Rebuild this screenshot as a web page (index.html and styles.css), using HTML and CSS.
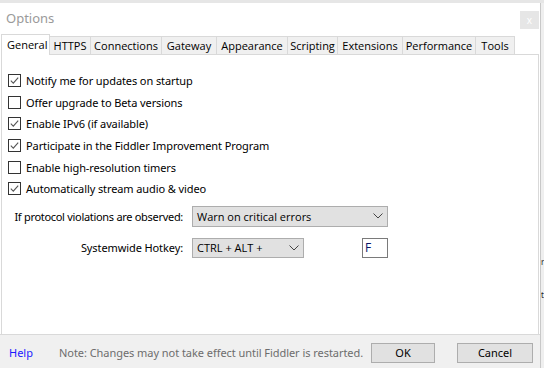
FILE: index.html
```html
<!DOCTYPE html>
<html>
<head>
<meta charset="utf-8">
<link rel="stylesheet" href="styles.css">
</head>
<body>
<div class="screen">
  <div class="dialog">
    <div class="titlebar">
      <span class="title">Options</span>
      <span class="close">x</span>
    </div>
    <div class="tabs">
      <div class="tab active w-general">General</div>
      <div class="tab w-https">HTTPS</div>
      <div class="tab w-conn">Connections</div>
      <div class="tab w-gate">Gateway</div>
      <div class="tab w-appear">Appearance</div>
      <div class="tab w-script">Scripting</div>
      <div class="tab w-ext">Extensions</div>
      <div class="tab w-perf">Performance</div>
      <div class="tab w-tools">Tools</div>
    </div>
    <div class="panel">
      <div class="checks">
        <label class="row"><svg class="cb" width="13" height="13" viewBox="0 0 13 13"><rect x="0.5" y="0.5" width="12" height="12" fill="#fff" stroke="#333"/><path d="M2.8 6.6 L5.3 9.1 L10.2 3.6" fill="none" stroke="#555" stroke-width="1.1"/></svg><span>Notify me for updates on startup</span></label>
        <label class="row"><svg class="cb" width="13" height="13" viewBox="0 0 13 13"><rect x="0.5" y="0.5" width="12" height="12" fill="#fff" stroke="#333"/></svg><span>Offer upgrade to Beta versions</span></label>
        <label class="row"><svg class="cb" width="13" height="13" viewBox="0 0 13 13"><rect x="0.5" y="0.5" width="12" height="12" fill="#fff" stroke="#333"/><path d="M2.8 6.6 L5.3 9.1 L10.2 3.6" fill="none" stroke="#555" stroke-width="1.1"/></svg><span>Enable IPv6 (if available)</span></label>
        <label class="row"><svg class="cb" width="13" height="13" viewBox="0 0 13 13"><rect x="0.5" y="0.5" width="12" height="12" fill="#fff" stroke="#333"/><path d="M2.8 6.6 L5.3 9.1 L10.2 3.6" fill="none" stroke="#555" stroke-width="1.1"/></svg><span>Participate in the Fiddler Improvement Program</span></label>
        <label class="row"><svg class="cb" width="13" height="13" viewBox="0 0 13 13"><rect x="0.5" y="0.5" width="12" height="12" fill="#fff" stroke="#333"/></svg><span>Enable high-resolution timers</span></label>
        <label class="row"><svg class="cb" width="13" height="13" viewBox="0 0 13 13"><rect x="0.5" y="0.5" width="12" height="12" fill="#fff" stroke="#333"/><path d="M2.8 6.6 L5.3 9.1 L10.2 3.6" fill="none" stroke="#555" stroke-width="1.1"/></svg><span>Automatically stream audio &amp; video</span></label>
      </div>
      <div class="form-row first">
        <span class="flabel tight">If protocol violations are observed:</span>
        <div class="select wide"><span>Warn on critical errors</span><svg width="10" height="6" viewBox="0 0 10 6"><path d="M0.5 0.5 L5 5 L9.5 0.5" fill="none" stroke="#444" stroke-width="1"/></svg></div>
      </div>
      <div class="form-row second">
        <span class="flabel">Systemwide Hotkey:</span>
        <div class="select narrow"><span>CTRL + ALT +</span><svg width="10" height="6" viewBox="0 0 10 6"><path d="M0.5 0.5 L5 5 L9.5 0.5" fill="none" stroke="#444" stroke-width="1"/></svg></div>
        <div class="keybox">F</div>
      </div>
    </div>
    <div class="footer">
      <span class="help">Help</span>
      <span class="note">Note: Changes may not take effect until Fiddler is restarted.</span>
      <div class="btn ok">OK</div>
      <div class="btn cancel">Cancel</div>
    </div>
  </div>
  <div class="behind">
    <span class="frag f1">r</span>
    <span class="frag f2">t</span>
  </div>
</div>
</body>
</html>
```
FILE: styles.css
```css
* { box-sizing: border-box; }
html, body { margin: 0; padding: 0; }
body {
  width: 544px;
  height: 368px;
  overflow: hidden;
  background: #e6e6e6;
  font-family: "Noto Sans", "Open Sans", sans-serif;
  font-size: 11px;
  color: #000;
}
.screen {
  display: flex;
  padding-top: 3px;
  height: 368px;
}
.dialog {
  width: 540px;
  height: 365px;
  background: #fff;
  display: flex;
  flex-direction: column;
}
.titlebar {
  height: 31px;
  display: flex;
  align-items: center;
  justify-content: space-between;
  padding-left: 6px;
}
.title {
  color: #9a9a9a;
  font-size: 13px;
  margin-top: -1px;
}
.close {
  width: 19px;
  height: 18px;
  background: #e6e6e6;
  color: #fff;
  font-size: 10px;
  display: flex;
  align-items: center;
  justify-content: center;
  margin-right: 1px;
  margin-top: 2px;
}
.tabs {
  display: flex;
  align-items: flex-end;
  height: 20px;
  padding-left: 1px;
  position: relative;
  z-index: 1;
}
.tab {
  height: 18px;
  background: #f0f0f0;
  border: 1px solid #d9d9d9;
  border-bottom: none;
  margin-left: -1px;
  display: flex;
  align-items: center;
  justify-content: center;
  font-size: 11px;
  color: #000;
  font-family: "Open Sans", "Noto Sans", sans-serif;
  white-space: nowrap;
}
.tab.active {
  height: 21px;
  background: #fff;
  margin-bottom: -1px;
  margin-left: 0;
  justify-content: flex-start;
  padding-left: 5px;
  padding-bottom: 2px;
}
.w-general { width: 49px; }
.w-https { width: 42px; }
.w-conn { width: 72px; }
.w-gate { width: 56px; }
.w-appear { width: 72px; }
.w-script { width: 51px; }
.w-ext { width: 66px; }
.w-perf { width: 74px; }
.w-tools { width: 40px; }

.panel {
  margin-left: 1px;
  width: 538px;
  height: 280px;
  border: 1px solid #d9d9d9;
  border-bottom: none;
  padding: 15px 0 0 6px;
}
.checks {
  display: flex;
  flex-direction: column;
}
.row {
  height: 21.6px;
  display: flex;
  align-items: center;
  gap: 5px;
  font-size: 11px;
  letter-spacing: -0.1px;
  white-space: nowrap;
}
.cb { flex: none; }
.form-row {
  display: flex;
  align-items: center;
}
.form-row.first { margin-top: 6px; height: 21px; }
.form-row.second { margin-top: 11px; height: 20px; }
.flabel {
  width: 175px;
  flex: none;
  text-align: right;
  margin-right: 9px;
  font-size: 11px;
  letter-spacing: -0.1px;
  white-space: nowrap;
}
.flabel.tight { letter-spacing: -0.3px; }
.select {
  height: 100%;
  background: #e1e1e1;
  border: 1px solid #adadad;
  display: flex;
  align-items: center;
  justify-content: space-between;
  padding: 0 4px 0 4px;
  font-size: 11px;
  font-family: "Open Sans", "Noto Sans", sans-serif;
  white-space: nowrap;
}
.select.wide { width: 196px; }
.select.narrow { width: 112px; }
.keybox {
  margin-left: 58px;
  width: 26px;
  height: 100%;
  border: 1px solid #7a7a7a;
  background: #fff;
  color: #0a1466;
  font-size: 12px;
  padding-left: 2px;
  display: flex;
  align-items: center;
  font-family: "Open Sans", "Noto Sans", sans-serif;
}
.footer {
  height: 34px;
  background: #f0f0f0;
  border-top: 1px solid #d9d9d9;
  display: flex;
  align-items: center;
  padding-left: 9px;
  padding-top: 2px;
}
.help {
  color: #1a1aff;
  font-size: 11px;
  width: 50px;
}
.note {
  color: #6d6d6d;
  font-size: 11px;
  width: 312px;
  letter-spacing: -0.05px;
  white-space: nowrap;
}
.btn {
  height: 20px;
  background: #e1e1e1;
  border: 1px solid #adadad;
  display: flex;
  align-items: center;
  justify-content: center;
  font-size: 11px;
}
.btn.ok { width: 64px; }
.btn.cancel { width: 76px; margin-left: 22px; }
.behind {
  width: 4px;
  height: 365px;
  border-left: 1px solid #c8c8c8;
  background: #efefef;
  overflow: hidden;
  display: flex;
  flex-direction: column;
  font-size: 8px;
  color: #222;
}
.frag { display: block; padding-left: 0; line-height: 10px; }
.f1 { margin-top: 254px; }
.f2 { margin-top: 23px; }
```
